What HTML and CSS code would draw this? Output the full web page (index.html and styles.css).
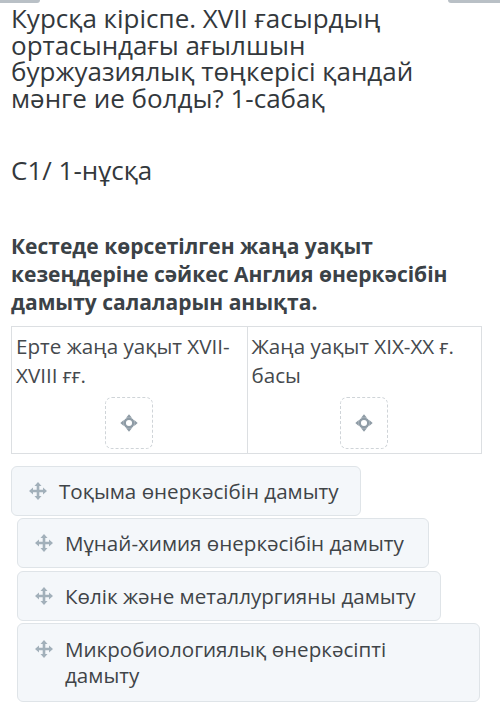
FILE: index.html
```html
<!DOCTYPE html>
<html>
<head>
  <meta charset="UTF-8" />
  <title>Курсқа кіріспе</title>
  <link rel="stylesheet" href="styles.css">
</head>
<body>
  <div class="top-strip">
    <span class="strip-left"></span>
    <span class="strip-right"></span>
  </div>

  <h1 class="lesson-title">Курсқа кіріспе. XVII ғасырдың ортасындағы ағылшын буржуазиялық төңкерісі қандай мәнге ие болды? 1-сабақ</h1>

  <h2 class="variant">С1/ 1-нұсқа</h2>

  <p class="question">Кестеде көрсетілген жаңа уақыт кезеңдеріне сәйкес Англия өнеркәсібін дамыту салаларын анықта.</p>

  <div class="match-table">
    <div class="cell">
      <div class="cell-title">Ерте жаңа уақыт XVII-XVIII ғғ.</div>
      <div class="drop-zone">
        <svg width="18" height="18" viewBox="0 0 16 16">
          <circle cx="8" cy="8" r="3.8" fill="none" stroke="#8f9ca6" stroke-width="2.2"/>
          <path d="M8 0.3 L10.6 3.3 H5.4 Z M8 15.7 L10.6 12.7 H5.4 Z M0.3 8 L3.3 5.4 V10.6 Z M15.7 8 L12.7 5.4 V10.6 Z" fill="#8f9ca6"/>
        </svg>
      </div>
    </div>
    <div class="cell">
      <div class="cell-title">Жаңа уақыт XIX-XX ғ. басы</div>
      <div class="drop-zone">
        <svg width="18" height="18" viewBox="0 0 16 16">
          <circle cx="8" cy="8" r="3.8" fill="none" stroke="#8f9ca6" stroke-width="2.2"/>
          <path d="M8 0.3 L10.6 3.3 H5.4 Z M8 15.7 L10.6 12.7 H5.4 Z M0.3 8 L3.3 5.4 V10.6 Z M15.7 8 L12.7 5.4 V10.6 Z" fill="#8f9ca6"/>
        </svg>
      </div>
    </div>
  </div>

  <div class="answers">
    <div class="answer first">
      <svg class="move" width="20" height="20" viewBox="0 0 20 20">
        <path d="M10 1 L13.5 5 H6.5 Z M10 19 L13.5 15 H6.5 Z M1 10 L5 6.5 V13.5 Z M19 10 L15 6.5 V13.5 Z" fill="#a2b0ba"/>
        <path d="M10 4 V16 M4 10 H16" stroke="#a2b0ba" stroke-width="2.6"/>
      </svg>
      <span>Тоқыма өнеркәсібін дамыту</span>
    </div>
    <div class="answer">
      <svg class="move" width="20" height="20" viewBox="0 0 20 20">
        <path d="M10 1 L13.5 5 H6.5 Z M10 19 L13.5 15 H6.5 Z M1 10 L5 6.5 V13.5 Z M19 10 L15 6.5 V13.5 Z" fill="#a2b0ba"/>
        <path d="M10 4 V16 M4 10 H16" stroke="#a2b0ba" stroke-width="2.6"/>
      </svg>
      <span>Мұнай-химия өнеркәсібін дамыту</span>
    </div>
    <div class="answer">
      <svg class="move" width="20" height="20" viewBox="0 0 20 20">
        <path d="M10 1 L13.5 5 H6.5 Z M10 19 L13.5 15 H6.5 Z M1 10 L5 6.5 V13.5 Z M19 10 L15 6.5 V13.5 Z" fill="#a2b0ba"/>
        <path d="M10 4 V16 M4 10 H16" stroke="#a2b0ba" stroke-width="2.6"/>
      </svg>
      <span>Көлік және металлургияны дамыту</span>
    </div>
    <div class="answer wide">
      <svg class="move" width="20" height="20" viewBox="0 0 20 20">
        <path d="M10 1 L13.5 5 H6.5 Z M10 19 L13.5 15 H6.5 Z M1 10 L5 6.5 V13.5 Z M19 10 L15 6.5 V13.5 Z" fill="#a2b0ba"/>
        <path d="M10 4 V16 M4 10 H16" stroke="#a2b0ba" stroke-width="2.6"/>
      </svg>
      <span>Микробиологиялық өнеркәсіпті дамыту</span>
    </div>
  </div>
</body>
</html>
```

FILE: styles.css
```css
body {
  margin: 0;
  padding: 0 11px;
  background: #fff;
  font-family: "Open Sans", "Noto Sans", sans-serif;
  color: #3a3f44;
}

.top-strip {
  display: flex;
  justify-content: space-between;
  height: 3px;
  margin: 0 -11px;
}

.strip-left {
  width: 40px;
  background: #b9c0c6;
  border-radius: 0 0 4px 0;
}

.strip-right {
  width: 52px;
  background: #b9c0c6;
  border-radius: 0 0 0 4px;
}

.lesson-title {
  margin: 2px 0 0;
  font-size: 26px;
  font-weight: 400;
  line-height: 26.5px;
  color: #33383c;
}

.variant {
  margin: 46px 0 0;
  font-size: 26px;
  font-weight: 400;
  line-height: 26.5px;
  color: #33383c;
}

.question {
  margin: 48px 0 0;
  font-size: 21px;
  font-weight: 700;
  line-height: 28px;
  color: #3b4247;
}

.match-table {
  display: grid;
  grid-template-columns: 1fr 1fr;
  margin-top: 10px;
  width: 469px;
  border: 1px solid #dcdfe2;
}

.cell {
  display: flex;
  flex-direction: column;
  align-items: center;
  padding: 5px 4px 4px;
}

.cell + .cell {
  border-left: 1px solid #dcdfe2;
}

.cell-title {
  align-self: stretch;
  font-size: 20.6px;
  line-height: 29px;
  color: #45494d;
}

.drop-zone {
  display: flex;
  align-items: center;
  justify-content: center;
  width: 46px;
  height: 50px;
  margin-top: 7px;
  border: 1px dashed #cfd4d8;
  border-radius: 7px;
}

.answers {
  display: flex;
  flex-direction: column;
  align-items: flex-start;
  gap: 2.5px;
  width: 469px;
  margin-top: 12px;
}

.answer {
  display: flex;
  align-items: flex-start;
  gap: 11px;
  margin-left: 6px;
  padding: 11px 24px 11px 16px;
  background: #f4f7fa;
  border: 1px solid #dfe4e8;
  border-radius: 6px;
  font-size: 20.6px;
  line-height: 26px;
  color: #3f4448;
}

.answer.first {
  margin-left: 0;
  padding-right: 21px;
}

.answer.wide {
  align-self: stretch;
  padding-top: 12px;
  padding-bottom: 13px;
}

.move {
  flex: none;
  margin-top: 3px;
}
```
